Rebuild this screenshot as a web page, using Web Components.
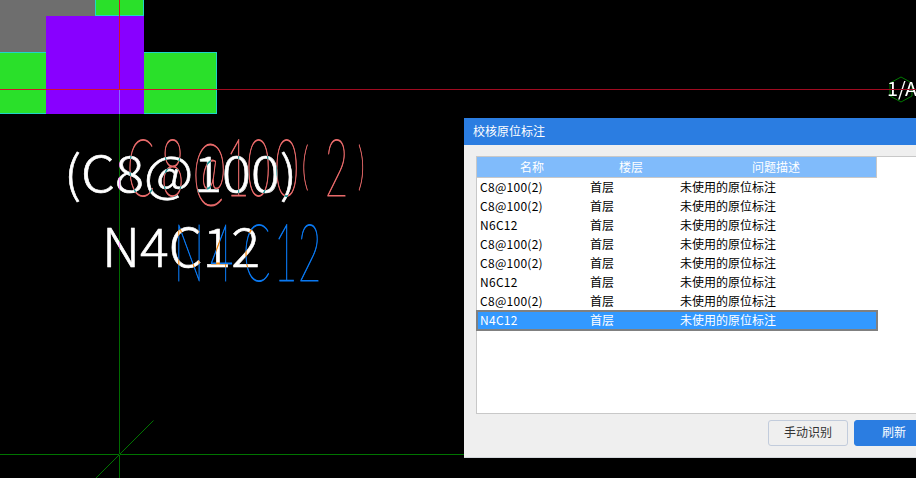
<!DOCTYPE html>
<html><head><meta charset="utf-8"><style>
html,body{margin:0;padding:0;background:#000;overflow:hidden}
body{width:916px;height:478px;position:relative;font-family:"Noto Sans CJK SC","Noto Sans",sans-serif}
</style></head><body>
<cad-canvas>
  <cad-line slot="over" style="left:0;top:89px;width:217px;height:1px;background:#d0142c"></cad-line>
  <cad-line slot="over" style="left:217px;top:89px;width:699px;height:1px;background:#a00a20"></cad-line>
  <cad-line slot="over" style="left:119px;top:0;width:1px;height:89px;background:#d0142c"></cad-line>
  <cad-line slot="over" style="left:119px;top:90px;width:1px;height:388px;background:#006a00;mix-blend-mode:difference"></cad-line>
</cad-canvas>
<check-dialog heading="校核原位标注">
  <issue-table>
    <issue-row name="C8@100(2)"></issue-row>
    <issue-row name="C8@100(2)"></issue-row>
    <issue-row name="N6C12"></issue-row>
    <issue-row name="C8@100(2)"></issue-row>
    <issue-row name="C8@100(2)"></issue-row>
    <issue-row name="N6C12"></issue-row>
    <issue-row name="C8@100(2)"></issue-row>
    <issue-row name="N4C12" selected></issue-row>
  </issue-table>
  <dialog-button slot="footer">手动识别</dialog-button>
  <dialog-button slot="footer" primary>刷新</dialog-button>
</check-dialog>
<script>
function shadow(el,html){el.attachShadow({mode:'open'}).innerHTML=html;return el.shadowRoot}
customElements.define('cad-line',class extends HTMLElement{connectedCallback(){shadow(this,`<style>:host{display:block;position:absolute}</style>`)}});
customElements.define('cad-canvas',class extends HTMLElement{connectedCallback(){shadow(this,`
<style>:host{display:block;position:absolute;inset:0;isolation:isolate}svg{display:block}
.w{font-family:"Noto Sans CJK SC","Noto Sans",sans-serif;fill:#fff;font-weight:300;stroke:#fff;stroke-width:.6px}
.thin{font-family:Lato,"Noto Sans",sans-serif;font-weight:100;mix-blend-mode:difference;stroke-width:.8px}
.thin,.thin tspan{vector-effect:non-scaling-stroke}
rect{shape-rendering:crispEdges}
</style>
<svg width="916" height="478" viewBox="0 0 916 478">
<rect x="0" y="0" width="95" height="52" fill="#6e6e6e"/>
<rect x="95" y="-2" width="49" height="18" fill="#1fd6c8"/><rect x="96" y="-2" width="47" height="17" fill="#2ae02a"/>
<rect x="-2" y="52" width="48" height="62" fill="#1fd6c8"/><rect x="-2" y="53" width="48" height="60" fill="#2ae02a"/>
<rect x="144" y="52" width="73" height="62" fill="#1fd6c8"/><rect x="144" y="53" width="72" height="60" fill="#2ae02a"/>
<rect x="46" y="16" width="98" height="98" fill="#8800ff"/>
<text class="w" x="64" y="192" font-size="50" textLength="233" lengthAdjust="spacingAndGlyphs">(C8@100)</text>
<text class="w" x="102" y="267" font-size="53" textLength="158" lengthAdjust="spacingAndGlyphs">N4C12</text>
<text class="thin" transform="scale(.5 1)" y="196" font-size="80" fill="#e86a6a" stroke="#e86a6a"><tspan x="254 322 386 452 494 550">C8@100</tspan><tspan font-size="52" x="604" y="184">(</tspan><tspan x="650" y="196">2</tspan><tspan font-size="52" x="716" y="184">)</tspan></text>
<text class="thin" transform="scale(.5 1)" y="281" font-size="80" fill="#0a78f0" stroke="#0a78f0" x="348 420 486 548 596">N4C12</text>
<line x1="0" y1="454.5" x2="916" y2="454.5" stroke="#007400"/>
<line x1="153.5" y1="420.5" x2="95.5" y2="478.5" stroke="#007400"/>
<polygon points="901,77 912,83 912,96 901,102 890,96 890,83" fill="none" stroke="#007800"/>
<text x="887" y="96" font-family="Noto Sans CJK SC,sans-serif" font-size="19" fill="#fff" textLength="30" lengthAdjust="spacingAndGlyphs">1/A</text>
</svg><slot name="over"></slot>`)}});

customElements.define('check-dialog',class extends HTMLElement{connectedCallback(){shadow(this,`
<style>:host{display:flex;flex-direction:column;position:absolute;left:464px;top:118px;width:484px;height:340px;background:#efefef;box-sizing:border-box;color:#000;font-size:12px;border-bottom:1px solid #d4d8dc}
header{flex:none;height:27px;background:#2b7de1;color:#fff;line-height:26px;padding-left:9px}
main{flex:1;display:flex;min-height:0;padding:11px 12px 0}
footer{flex:none;height:43px;display:flex;justify-content:flex-end;align-items:flex-start;gap:6px;padding:6px 14px 0;box-sizing:border-box}
</style><header>${this.getAttribute('heading')}</header><main><slot></slot></main><footer><slot name="footer"></slot></footer>`)}});

customElements.define('issue-table',class extends HTMLElement{connectedCallback(){shadow(this,`
<style>:host{display:block;flex:1;background:#fff;border:1px solid #c8c8c8;box-sizing:border-box}
.h{display:grid;grid-template-columns:110px 88px 202px;width:400px;height:21px;box-sizing:border-box;background:#80bbfb;color:#fff;text-align:center;line-height:20px;border-bottom:1px solid #c8c8c8;border-right:1px solid #c8c8c8}
</style><div class="h"><span>名称</span><span>楼层</span><span>问题描述</span></div><slot></slot>`)}});

customElements.define('issue-row',class extends HTMLElement{connectedCallback(){shadow(this,`
<style>:host{display:grid;grid-template-columns:110px 90px 200px;width:400px;height:19px;line-height:17px;box-sizing:border-box;color:#000}
:host([selected]){background:#3399ff;color:#fff;outline:2px solid #808080;outline-offset:-1px}
span{padding-left:3px;white-space:nowrap}
.n{letter-spacing:.28px}
</style><span class="n">${this.getAttribute('name')}</span><span>首层</span><span>未使用的原位标注</span>`)}});

customElements.define('dialog-button',class extends HTMLElement{connectedCallback(){shadow(this,`
<style>:host{display:flex;align-items:center;justify-content:center;width:80px;height:26px;box-sizing:border-box;border:1px solid #c2ccdc;border-radius:3px;font-size:12px;line-height:22px;padding-bottom:2px;color:#333;background:#efefef}
:host([primary]){background:#2b7de1;border-color:#2b7de1;color:#fff}
</style><slot></slot>`)}});
</script>
</body></html>
